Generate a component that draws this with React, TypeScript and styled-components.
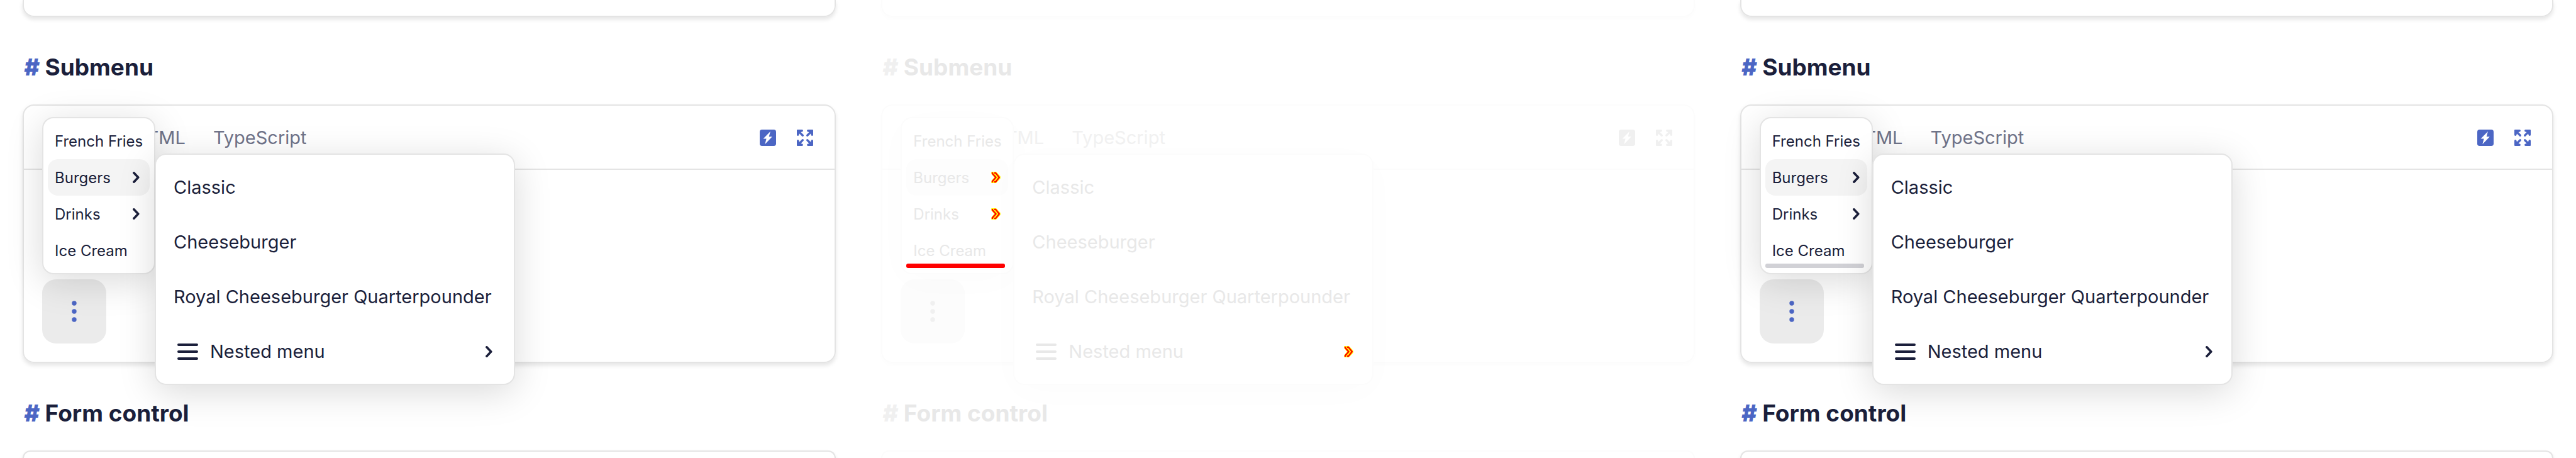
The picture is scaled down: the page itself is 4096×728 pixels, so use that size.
import React from "react";
import styled, { createGlobalStyle, ThemeProvider } from "styled-components";

type Palette = {
  text: string;
  muted: string;
  accent: string;
  border: string;
  hover: string;
  button: string;
  cardShadow: string;
  menuShadow: string;
  bar: string;
};

const normal: Palette = {
  text: "#1b1f3b",
  muted: "#70748a",
  accent: "#4c66c4",
  border: "#e4e4e4",
  hover: "#f4f4f4",
  button: "#ebebeb",
  cardShadow: "rgba(0, 0, 0, 0.1)",
  menuShadow: "rgba(0, 0, 0, 0.15)",
  bar: "#d1d1d6",
};

const faded: Palette = {
  text: "#e8e8e8",
  muted: "#f1f1f1",
  accent: "#f0f0f0",
  border: "#fcfcfc",
  hover: "#fdfdfd",
  button: "#fcfcfc",
  cardShadow: "rgba(0, 0, 0, 0.01)",
  menuShadow: "rgba(0, 0, 0, 0.015)",
  bar: "#ff0000",
};

type Themed = { theme: any };

const GlobalStyle = createGlobalStyle`
  *, *::before, *::after { box-sizing: border-box; }
  body { margin: 0; background: #ffffff; }
  button { font: inherit; color: inherit; border: 0; background: none; padding: 0; text-align: left; cursor: pointer; }
`;

const Board = styled.main`
  display: flex;
  height: 100vh;
  overflow: hidden;
  font-family: Inter, "Liberation Sans", sans-serif;
`;

const Pane = styled.section`
  flex: 1 1 0;
  min-width: 0;
  display: flex;
  flex-direction: column;
  padding: 0 36px;
  color: ${(p: Themed) => p.theme.text};
`;

const Card = styled.article`
  border: 2px solid ${(p: Themed) => p.theme.border};
  border-radius: 18px;
  box-shadow: 0 4px 6px ${(p: Themed) => p.theme.cardShadow};
`;

const CardEnd = styled(Card)`
  height: 27px;
  flex-shrink: 0;
  border-top: 0;
  border-radius: 0 0 18px 18px;
`;

const CardStart = styled(Card)`
  flex: 1;
  border-bottom: 0;
  border-radius: 18px 18px 0 0;
`;

const Heading = styled.h2`
  margin: 0;
  padding: 58px 0 37px 2px;
  display: flex;
  gap: 9px;
  font-size: 37px;
  line-height: 44px;
  font-weight: 700;
`;

const Anchor = styled.a`
  color: ${(p: Themed) => p.theme.accent};
  font-style: italic;
  font-weight: 900;
  text-decoration: none;
`;

const CardHeader = styled.header`
  display: flex;
  align-items: center;
  justify-content: space-between;
  height: 102px;
  padding: 2px 34px 0 174px;
  border-bottom: 2px solid ${(p: Themed) => p.theme.border};
`;

const Tabs = styled.nav`
  display: flex;
  gap: 44px;
  font-size: 29px;
  line-height: 40px;
  color: ${(p: Themed) => p.theme.muted};
`;

const Tools = styled.div`
  display: flex;
  gap: 33px;
  color: ${(p: Themed) => p.theme.accent};

  svg { display: block; }
`;

const CardBody = styled.div`
  padding: 174px 29px 29px;
`;

const MenuHost = styled.div`
  position: relative;
  width: 102px;
`;

const MoreButton = styled.button`
  display: flex;
  align-items: center;
  justify-content: center;
  width: 102px;
  height: 102px;
  border-radius: 22px;
  background: ${(p: Themed) => p.theme.button};
  color: ${(p: Themed) => p.theme.accent};
`;

const Popup = styled.div`
  border: 2px solid ${(p: Themed) => p.theme.border};
  border-radius: 18px;
  background: #ffffff;
  box-shadow: 0 11px 58px ${(p: Themed) => p.theme.menuShadow};
`;

const Menu = styled(Popup)`
  position: absolute;
  left: 0;
  bottom: calc(100% + 8px);
  width: 180px;
  padding: 7px;
  font-size: 24px;
`;

const Submenu = styled(Popup)`
  position: absolute;
  z-index: 1;
  left: calc(100% + 8px);
  top: -9px;
  width: 573px;
  padding: 8px;
  font-size: 29px;
`;

const ItemHost = styled.div`
  position: relative;
`;

const Item = styled.button<{ $large?: boolean; $active?: boolean; $end?: number }>`
  display: flex;
  align-items: center;
  width: 100%;
  height: ${(p) => (p.$large ? 87 : 58)}px;
  padding: 0 ${(p) => p.$end ?? 10}px 0 ${(p) => (p.$large ? 20 : 11)}px;
  border-radius: 16px;
  white-space: nowrap;
  && { background: ${(p) => (p.$active ? (p.theme as any).hover : "none")}; }

  svg { flex-shrink: 0; }
  span { flex: 1; }
`;

const BurgerIcon = styled.svg`
  margin-right: 18px;
`;

const Bar = styled.div`
  position: absolute;
  left: 7px;
  bottom: 8px;
  width: 157px;
  height: 7px;
  border-radius: 3px;
  background: ${(p: Themed) => p.theme.bar};
`;

const Chevron = () => (
  <svg width="11" height="18" viewBox="0 0 12 20" aria-hidden="true">
    <path d="M2 2L9.6 10L2 18" fill="none" stroke="currentColor" strokeWidth="4" strokeLinecap="round" strokeLinejoin="round" />
  </svg>
);

const ChangedChevron = () => (
  <svg width="15" height="18" viewBox="0 0 16 20" aria-hidden="true">
    <path d="M0 0H8.5L16 8V12L8.5 20H0V16L5 10L0 4Z" fill="#ffff00" />
    <path d="M1.8 1.2V3.2L8 10L1.8 16.8V18.8M5 2H7.5L14 10L7.5 18H5" fill="none" stroke="#ff0000" strokeWidth="2.5" />
  </svg>
);

const BoltIcon = () => (
  <svg width="26" height="26" viewBox="0 0 28 28" aria-hidden="true">
    <rect width="28" height="28" rx="4" fill="currentColor" />
    <path d="M18.2 3.2L6 15.7H11.4L9 25L21.3 12.2H15.8Z" fill="#ffffff" />
  </svg>
);

const cornerTransforms = ["", "translate(28 0) scale(-1 1)", "translate(0 28) scale(1 -1)", "translate(28 28) scale(-1 -1)"];

const ExpandIcon = () => (
  <svg width="26" height="26" viewBox="0 0 28 28" aria-hidden="true">
    {cornerTransforms.map((t) => (
      <g key={t} transform={t || undefined}>
        <path d="M0 1.2Q0 0 1.2 0H9Q10.7 0 10.7 1.8Q10.7 3.4 9 3.8L6.8 4.3L4.3 6.8L3.8 9Q3.4 10.7 1.8 10.7Q0 10.7 0 9Z" fill="currentColor" />
        <path d="M4 4L10 10" fill="none" stroke="currentColor" strokeWidth="3.6" strokeLinecap="round" />
      </g>
    ))}
  </svg>
);

const DotsIcon = () => (
  <svg width="8" height="34" viewBox="0 0 8 34" fill="currentColor" aria-hidden="true">
    <circle cx="4" cy="4" r="3.7" />
    <circle cx="4" cy="17" r="3.7" />
    <circle cx="4" cy="30" r="3.7" />
  </svg>
);

const Section = ({ title }: { title: string }) => {
  const id = title.toLowerCase().replace(" ", "-");
  return (
    <Heading>
      <Anchor href={`#${id}`} aria-label={`Link to ${title}`}>#</Anchor>
      {title}
    </Heading>
  );
};

type Variant = "before" | "diff" | "after";

const Demo = ({ variant }: { variant: Variant }) => {
  const arrow = variant === "diff" ? <ChangedChevron /> : <Chevron />;
  const end = variant === "before" ? 16 : 12;
  return (
    <Pane>
      <CardEnd />
      <Section title="Submenu" />
      <Card>
        <CardHeader>
          <Tabs>
            <button type="button">HTML</button>
            <button type="button">TypeScript</button>
          </Tabs>
          <Tools>
            <button type="button" aria-label="Edit online"><BoltIcon /></button>
            <button type="button" aria-label="Full screen"><ExpandIcon /></button>
          </Tools>
        </CardHeader>
        <CardBody>
          <MenuHost>
            <MoreButton type="button" aria-label="Open menu"><DotsIcon /></MoreButton>
            <Menu role="menu">
              <Item role="menuitem">French Fries</Item>
              <ItemHost>
                <Item role="menuitem" $active $end={end}><span>Burgers</span>{arrow}</Item>
                <Submenu role="menu">
                  <Item role="menuitem" $large>Classic</Item>
                  <Item role="menuitem" $large>Cheeseburger</Item>
                  <Item role="menuitem" $large>Royal Cheeseburger Quarterpounder</Item>
                  <Item role="menuitem" $large $end={end + 10}>
                    <BurgerIcon width="40" height="27" viewBox="0 0 40 27" aria-hidden="true">
                      <path d="M8 3H37M8 14H37M8 25H37" stroke="currentColor" strokeWidth="4" strokeLinecap="round" />
                    </BurgerIcon>
                    <span>Nested menu</span>
                    {arrow}
                  </Item>
                </Submenu>
              </ItemHost>
              <Item role="menuitem" $end={end}><span>Drinks</span>{arrow}</Item>
              <Item role="menuitem">Ice Cream</Item>
              {variant !== "before" && <Bar />}
            </Menu>
          </MenuHost>
        </CardBody>
      </Card>
      <Section title="Form control" />
      <CardStart />
    </Pane>
  );
};

export default function App() {
  return (
    <>
      <GlobalStyle />
      <Board>
        <ThemeProvider theme={normal}><Demo variant="before" /></ThemeProvider>
        <ThemeProvider theme={faded}><Demo variant="diff" /></ThemeProvider>
        <ThemeProvider theme={normal}><Demo variant="after" /></ThemeProvider>
      </Board>
    </>
  );
}
